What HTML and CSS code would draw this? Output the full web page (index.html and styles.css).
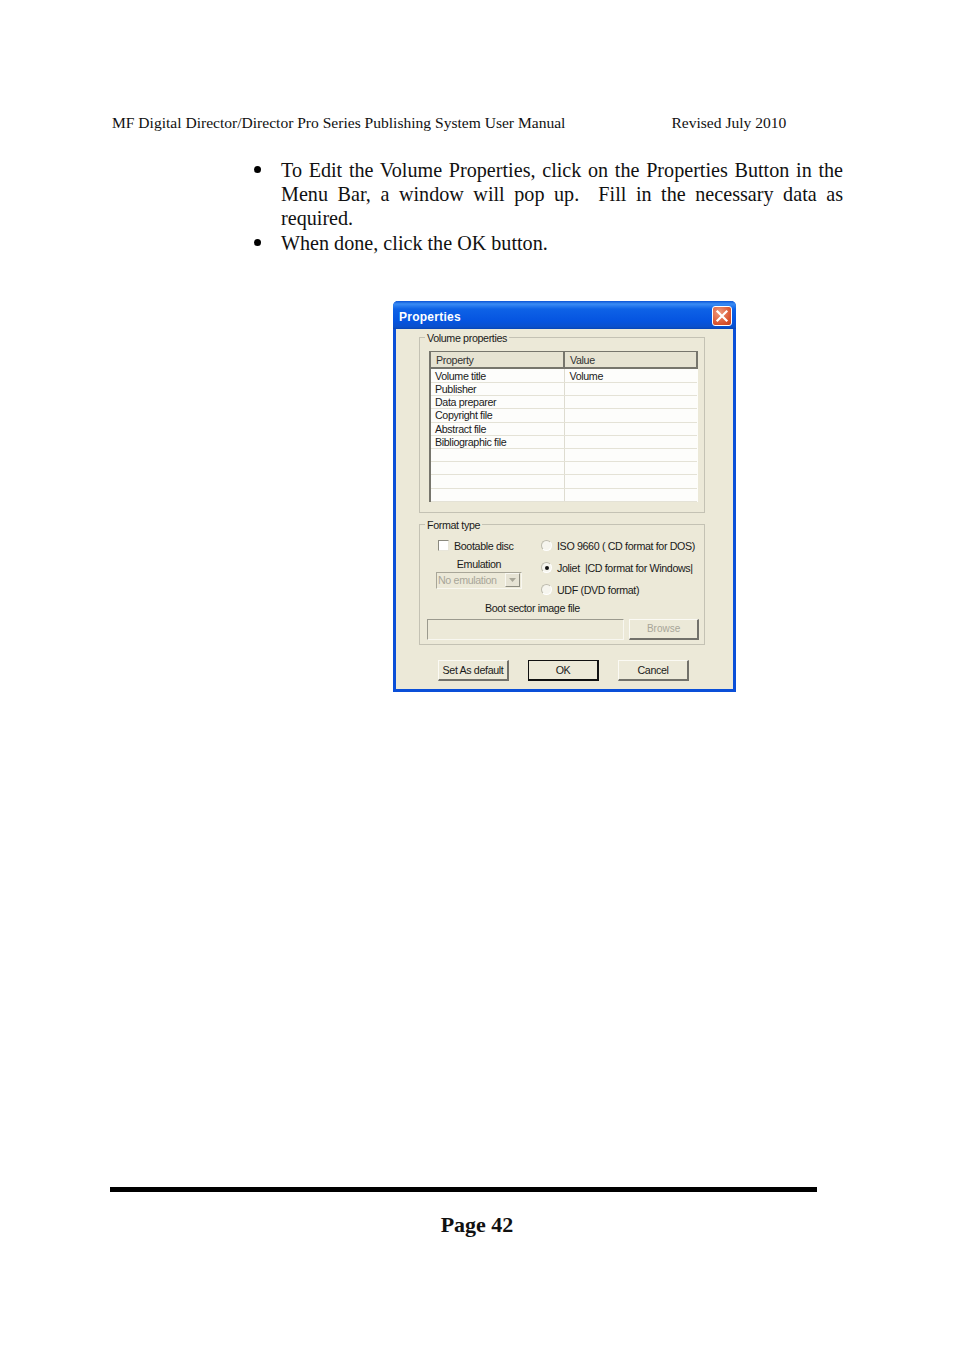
FILE: index.html
```html
<!DOCTYPE html>
<html lang="en">
<head>
<meta charset="utf-8">
<title>Page 42</title>
<link rel="stylesheet" href="styles.css">
</head>
<body>
<main class="page">
  <header class="running-head">
    <span>MF Digital Director/Director Pro Series Publishing System User Manual</span>
    <span>Revised July 2010</span>
  </header>
  <ul class="steps">
    <li>To Edit the Volume Properties, click on the Properties Button in the Menu Bar, a window will pop up. &nbsp;Fill in the necessary data as required.</li>
    <li>When done, click the OK button.</li>
  </ul>
  <section class="dialog">
    <div class="titlebar">
      <span class="title">Properties</span>
      <span class="close"><svg viewBox="0 0 20 20" width="20" height="20"><path d="M5.5 5.5l9 9M14.5 5.5l-9 9" stroke="#fff" stroke-width="2.2" stroke-linecap="square" fill="none"/></svg></span>
    </div>
    <div class="dialog-body">
      <fieldset class="group volume">
        <legend>Volume properties</legend>
        <table class="grid">
          <thead><tr><th>Property</th><th>Value</th></tr></thead>
          <tbody>
            <tr><td>Volume title</td><td>Volume</td></tr>
            <tr><td>Publisher</td><td></td></tr>
            <tr><td>Data preparer</td><td></td></tr>
            <tr><td>Copyright file</td><td></td></tr>
            <tr><td>Abstract file</td><td></td></tr>
            <tr><td>Bibliographic file</td><td></td></tr>
            <tr><td></td><td></td></tr>
            <tr><td></td><td></td></tr>
            <tr><td></td><td></td></tr>
            <tr><td></td><td></td></tr>
          </tbody>
        </table>
      </fieldset>
      <fieldset class="group format">
        <legend>Format type</legend>
        <div class="format-cols">
          <div class="format-left">
            <div class="option check-row"><span class="check"></span><span>Bootable disc</span></div>
            <div class="emulation">Emulation</div>
            <div class="combo"><span>No emulation</span><span class="combo-btn"><svg viewBox="0 0 7 4" width="7" height="4"><path d="M0 0h7L3.5 4z" fill="#a8a698"/></svg></span></div>
          </div>
          <div class="format-right">
            <div class="option"><span class="radio"></span><span>ISO 9660 ( CD format for DOS)</span></div>
            <div class="option"><span class="radio on"></span><span>Joliet &nbsp;|CD format for Windows|</span></div>
            <div class="option"><span class="radio"></span><span>UDF (DVD format)</span></div>
          </div>
        </div>
        <div class="boot-label">Boot sector image file</div>
        <div class="boot-row">
          <span class="boot-input"></span>
          <span class="btn disabled">Browse</span>
        </div>
      </fieldset>
      <div class="actions">
        <span class="btn">Set As default</span>
        <span class="btn default">OK</span>
        <span class="btn">Cancel</span>
      </div>
    </div>
  </section>
  <footer class="page-foot">
    <div class="rule"></div>
    <div class="page-no">Page 42</div>
  </footer>
</main>
</body>
</html>
```

FILE: styles.css
```css
* { box-sizing: border-box; }
html, body { margin: 0; padding: 0; background: #fff; }
body { width: 954px; height: 1351px; overflow: hidden; font-family: "Liberation Serif", serif; color: #111; }
.page { padding: 114px 0 0 0; }

.running-head { display: flex; gap: 106px; padding-left: 112px; font-size: 15.55px; line-height: 18px; }

.steps { list-style: none; margin: 26px 111px 0 253px; padding: 0; font-size: 20.15px; line-height: 24.2px; }
.steps li { position: relative; padding-left: 28px; text-align: justify; }
.steps li::before { content: ""; position: absolute; left: 1px; top: 8px; width: 7px; height: 7px; border-radius: 50%; background: #000; }

.dialog { width: 343px; height: 391px; margin: 46px 0 0 393px; background: #ece9d8; border: 3px solid #0a4fd8; border-top: 0; border-radius: 5px 5px 0 0; display: flex; flex-direction: column; font-family: "Liberation Sans", sans-serif; font-size: 10.7px; letter-spacing: -.36px; color: #1a1a1a; }
.titlebar { height: 28px; margin: 0 -3px; padding: 4px 4px 0 6px; display: flex; align-items: center; justify-content: space-between; border-radius: 5px 5px 0 0; background: linear-gradient(#0a54d6 0, #3a8cf4 3px, #0e62e6 8px, #0554e0 20px, #0a50cc 26px, #0644b4 28px); }
.title { color: #fff; font-weight: 700; font-size: 12px; letter-spacing: .25px; }
.close { width: 20px; height: 20px; margin-top: -2px; border: 1px solid #fff; border-radius: 3px; background: radial-gradient(circle at 35% 30%, #ee9a7e, #d9512c 70%, #c2401f); display: block; }
.close svg { display: block; margin: -1px; }

.dialog-body { flex: 1; display: flex; flex-direction: column; }
.group { margin: 0 28px 0 23px; padding: 0; border: 1px solid #c4c2b4; min-width: 0; }
.group legend { padding: 0 2px; line-height: 12px; white-space: nowrap; }
.volume { height: 181px; margin-top: 3px; padding: 7px 7px 0 9px; }
.volume legend { margin-left: -4px; }
.format { height: 126px; margin-top: 6px; padding: 9px 5px 0 7px; }
.format legend { margin-left: -2px; }

.grid { width: 269px; height: 151px; border-collapse: collapse; table-layout: fixed; background: #fdfdfb; border-left: 2px solid #76756c; border-top: 1px solid #76756c; border-bottom: 1px solid #d6d4c6; }
.grid th { height: 17px; padding: 0 0 0 5px; text-align: left; font-weight: 400; background: #e6e3d2; border-top: 1px solid #76756c; border-right: 2px solid #76756c; border-bottom: 2px solid #76756c; box-sizing: border-box; color: #333; }
.grid th:first-child { width: 134px; }
.grid td { height: 13px; padding: 0 0 0 4px; line-height: 12px; border-bottom: 1px solid #e4e2d6; border-right: 1px solid #dedcd0; white-space: nowrap; overflow: hidden; }
.grid tbody tr:first-child td { height: 14px; }
.grid td:last-child { padding-left: 5px; border-right: 0; }

.format-cols { display: flex; }
.format-left { width: 113px; padding-left: 9px; }
.format-right { flex: 1; display: flex; flex-direction: column; gap: 10px; padding-left: 1px; }
.option { display: flex; align-items: center; gap: 5px; height: 12px; white-space: nowrap; }
.check-row { gap: 5px; padding-left: 2px; }
.check { width: 11px; height: 11px; background: #fff; border: 1px solid #8a897e; border-right-color: #e8e6da; border-bottom-color: #e8e6da; }
.radio { width: 11px; height: 11px; border-radius: 50%; background: #f6f5ee; border: 1px solid #bdbbad; border-right-color: #fff; border-bottom-color: #fff; position: relative; }
.radio.on::after { content: ""; position: absolute; left: 3px; top: 3px; width: 4px; height: 4px; border-radius: 50%; background: #111; }
.emulation { margin-top: 6px; height: 12px; line-height: 12px; text-align: center; width: 86px; }
.combo { margin-top: 2px; width: 86px; height: 17px; padding: 0 1px 0 1px; display: flex; align-items: center; justify-content: space-between; border: 1px solid #a8a698; border-right-color: #f8f7f0; border-bottom-color: #f8f7f0; color: #a8a698; white-space: nowrap; }
.combo-btn { width: 15px; height: 14px; display: flex; align-items: center; justify-content: center; background: #e6e3d4; border: 1px solid #f8f7f0; border-right-color: #8d8c80; border-bottom-color: #8d8c80; }
.boot-label { margin: 6px 0 0 58px; height: 12px; line-height: 12px; white-space: nowrap; }
.boot-row { margin-top: 5px; display: flex; gap: 5px; }
.boot-input { width: 198px; height: 21px; background: #ece9d8; border: 1px solid #9b9a8e; border-right-color: #f8f7f0; border-bottom-color: #f8f7f0; }
.btn { width: 71px; height: 21px; display: flex; align-items: center; justify-content: center; white-space: nowrap; background: #ece9d8; border: 1px solid #fbfaf4; border-right: 2px solid #72716a; border-bottom: 2px solid #72716a; }
.btn.disabled { width: 70px; color: #a8a698; font-size: 10px; letter-spacing: 0; }
.btn.default { border: 2px solid #111; border-top-width: 1px; border-left-width: 1px; }

.actions { display: flex; gap: 19px; margin: 15px 0 0 42px; }

.page-foot { margin-top: 495px; padding-left: 110px; }
.rule { width: 707px; height: 5px; background: #000; }
.page-no { width: 734px; margin-top: 20px; text-align: center; font-size: 22px; line-height: 26px; font-weight: 700; }
```
